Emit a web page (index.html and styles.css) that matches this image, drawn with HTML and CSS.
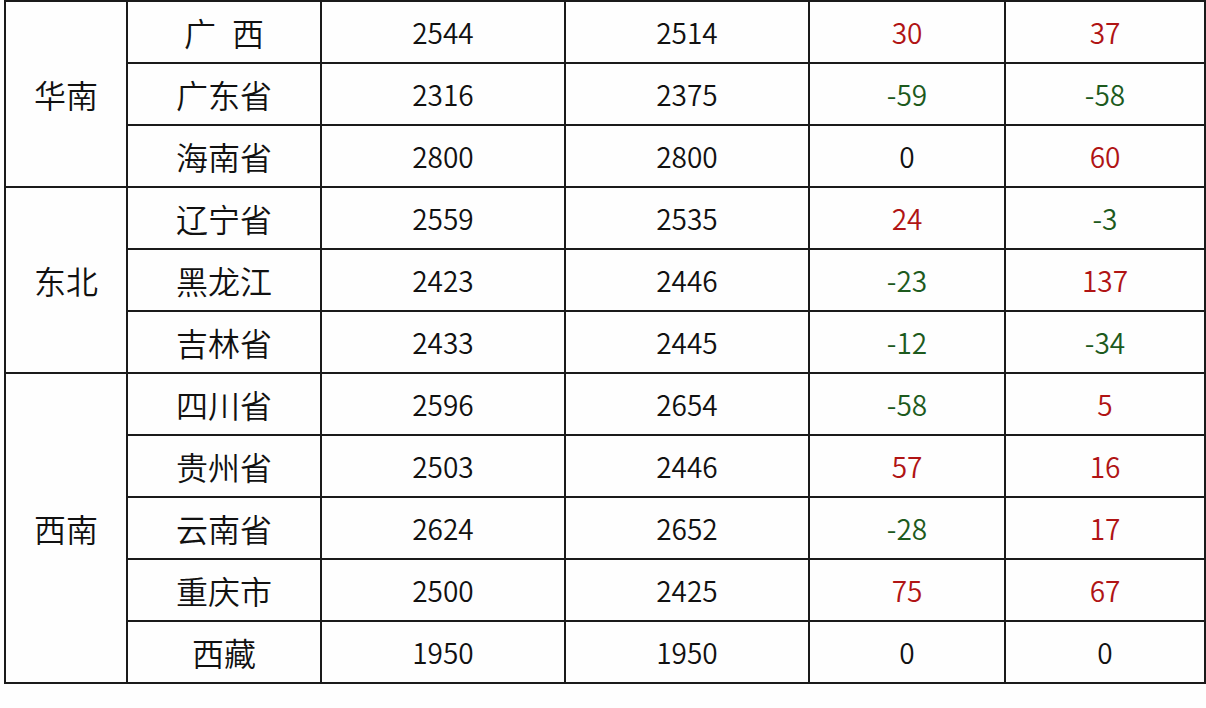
FILE: index.html
```html
<!DOCTYPE html>
<html lang="zh">
<head>
<meta charset="utf-8">
<link rel="stylesheet" href="styles.css">
</head>
<body>
<div class="wrap">
<table class="price">
  <colgroup>
    <col class="c-region"><col class="c-prov"><col class="c-num"><col class="c-num"><col class="c-d1"><col class="c-d2">
  </colgroup>
  <tbody>
    <tr><td class="region" rowspan="3">华南</td><td class="prov">广<span class="gap"></span>西</td><td class="num">2544</td><td class="num">2514</td><td class="num up">30</td><td class="num up">37</td></tr>
    <tr><td class="prov">广东省</td><td class="num">2316</td><td class="num">2375</td><td class="num down">-59</td><td class="num down">-58</td></tr>
    <tr><td class="prov">海南省</td><td class="num">2800</td><td class="num">2800</td><td class="num">0</td><td class="num up">60</td></tr>
    <tr><td class="region" rowspan="3">东北</td><td class="prov">辽宁省</td><td class="num">2559</td><td class="num">2535</td><td class="num up">24</td><td class="num down">-3</td></tr>
    <tr><td class="prov">黑龙江</td><td class="num">2423</td><td class="num">2446</td><td class="num down">-23</td><td class="num up">137</td></tr>
    <tr><td class="prov">吉林省</td><td class="num">2433</td><td class="num">2445</td><td class="num down">-12</td><td class="num down">-34</td></tr>
    <tr><td class="region" rowspan="5">西南</td><td class="prov">四川省</td><td class="num">2596</td><td class="num">2654</td><td class="num down">-58</td><td class="num up">5</td></tr>
    <tr><td class="prov">贵州省</td><td class="num">2503</td><td class="num">2446</td><td class="num up">57</td><td class="num up">16</td></tr>
    <tr><td class="prov">云南省</td><td class="num">2624</td><td class="num">2652</td><td class="num down">-28</td><td class="num up">17</td></tr>
    <tr><td class="prov">重庆市</td><td class="num">2500</td><td class="num">2425</td><td class="num up">75</td><td class="num up">67</td></tr>
    <tr><td class="prov">西藏</td><td class="num">1950</td><td class="num">1950</td><td class="num">0</td><td class="num">0</td></tr>
  </tbody>
</table>
</div>
</body>
</html>
```
FILE: styles.css
```css
html, body {
  margin: 0;
  padding: 0;
  background: #fefefe;
}
.wrap {
  padding: 0 0 0 4px;
}
.price {
  border-collapse: collapse;
  table-layout: fixed;
  width: 1200px;
  font-family: "Noto Sans CJK SC", sans-serif;
  font-weight: 350;
  color: #111;
}
.c-region { width: 122px; }
.c-prov { width: 194px; }
.c-num { width: 244px; }
.c-d1 { width: 196px; }
.c-d2 { width: 200px; }
.price td {
  border: 2px solid #1a1a1a;
  height: 60px;
  padding: 0;
  text-align: center;
  vertical-align: middle;
  line-height: 1;
}
.region, .prov {
  font-size: 32px;
}
.gap {
  display: inline-block;
  width: 16px;
}
.num {
  font-size: 28px;
}
.up { color: #b01414; }
.down { color: #1d5a1d; }
```
